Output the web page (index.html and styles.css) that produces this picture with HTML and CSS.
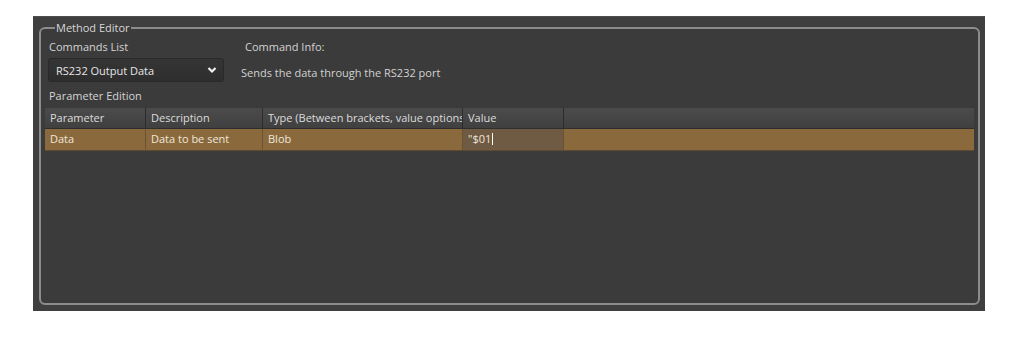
FILE: index.html
```html
<!DOCTYPE html>
<html>
<head>
<meta charset="utf-8">
<link rel="stylesheet" href="styles.css">
</head>
<body>
<div class="panel">
  <fieldset class="editor">
    <legend>Method Editor</legend>
    <div class="top">
      <div class="cmd-col">
        <div class="label">Commands List</div>
        <div class="select">
          <span>RS232 Output Data</span>
          <svg width="10" height="8" viewBox="0 0 10 8"><path d="M1.5 2 L5 5.5 L8.5 2" fill="none" stroke="#f2f2f2" stroke-width="2.2"/></svg>
        </div>
      </div>
      <div class="info-col">
        <div class="label info-label">Command Info:</div>
        <div class="info-text">Sends the data through the RS232 port</div>
      </div>
    </div>
    <div class="label pe">Parameter Edition</div>
    <div class="table">
      <div class="row head">
        <div class="c c1">Parameter</div>
        <div class="c c2">Description</div>
        <div class="c c3">Type (Between brackets, value options</div>
        <div class="c c4">Value</div>
        <div class="c c5"></div>
      </div>
      <div class="row sel">
        <div class="c c1">Data</div>
        <div class="c c2">Data to be sent</div>
        <div class="c c3">Blob</div>
        <div class="c c4 edit">"$01<span class="caret"></span></div>
        <div class="c c5"></div>
      </div>
    </div>
  </fieldset>
</div>
</body>
</html>
```
FILE: styles.css
```css
html, body { margin: 0; padding: 0; background: #ffffff; }
body { padding: 16px 0 0 33px; font-family: "Open Sans", "Noto Sans", "DejaVu Sans", sans-serif; font-size: 11px; color: #d2d2d2; }
.panel {
  width: 952px; height: 295px; box-sizing: border-box;
  background: #3f3f3f;
  border-top: 1px solid #4e4e4e;
  padding: 5px 5px 5px 6px;
}
.editor {
  margin: 0; height: 283px; box-sizing: border-box;
  border: 2px solid #8c8c8c; border-radius: 6px;
  padding: 0 4px 0 4px;
  background: #3b3b3b;
}
legend { padding: 0 1px; margin-left: 10px; color: #d8d8d8; line-height: 12px; }
.top { display: flex; margin-top: 6px; }
.cmd-col { width: 196px; }
.label { line-height: 14px; padding-left: 4px; color: #d4d4d4; }
.select {
  margin-top: 4px; width: 176px; height: 24px; box-sizing: border-box;
  background: linear-gradient(#353535, #2e2e2e); border: 1px solid #2a2a2a; border-radius: 3px;
  display: flex; align-items: center; justify-content: space-between;
  padding: 0 6px 0 7px; color: #e6e6e6; margin-left: 3px;
}
.info-col { display: flex; flex-direction: column; }
.info-label { padding-left: 4px; }
.info-text { margin-top: 11px; padding-left: 0; }
.pe { margin-top: 7px; }
.table { margin-top: 5px; }
.row { display: flex; height: 20px; }
.row .c { box-sizing: border-box; line-height: 19px; padding-left: 5px; white-space: nowrap; overflow: hidden; border-right: 1px solid #2c2c2c; }
.head { background: linear-gradient(#4b4b4b, #404040); border-bottom: 1px solid #2e2e2e; color: #dcdcdc; }
.sel { background: #8a6a3d; color: #efe6da; height: 21px; border-bottom: 1px solid #5e4a30; }
.sel .c { border-right-color: #6b5232; }
.c1 { width: 101px; }
.c2 { width: 117px; }
.c3 { width: 200px; }
.c4 { width: 101px; }
.c5 { flex: 1; border-right: none !important; }
.edit { background: #6f5a43; }
.caret { display: inline-block; width: 1px; height: 12px; background: #ffffff; vertical-align: -2px; margin-left: 1px; }
```
